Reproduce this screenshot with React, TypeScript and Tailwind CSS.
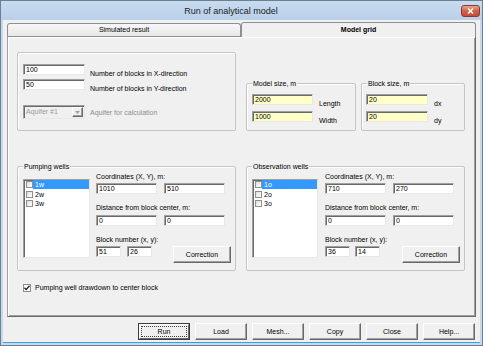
import type { ReactNode } from 'react'

const sunken =
  'border border-t-[#a0a0a0] border-l-[#a0a0a0] border-b-[#e8e8e8] border-r-[#e8e8e8] shadow-[inset_1px_1px_0_#696969]'
const raised =
  'border border-t-white border-l-white border-b-[#696969] border-r-[#696969] shadow-[inset_-1px_-1px_0_#a0a0a0]'

function Field({ value, className = '' }: { value: string; className?: string }) {
  return (
    <div className={`h-[11px] pl-[2px] pt-[1px] text-[7px] leading-[8px] ${sunken} ${className}`}>
      {value}
    </div>
  )
}

function Group({ title, className = '', children }: { title?: string; className?: string; children: ReactNode }) {
  return (
    <div className={`border border-[#c4c4c4] rounded-[2px] shadow-[inset_1px_1px_0_#fff] ${className}`}>
      {title && (
        <div className="-mt-[4px] ml-[5px] w-fit px-[1px] bg-[#f0f0f0] text-[7px] leading-[8px]">{title}</div>
      )}
      {children}
    </div>
  )
}

function Box({ checked = false }: { checked?: boolean }) {
  return (
    <div className="w-[7px] h-[7px] shrink-0 border border-[#8e8f8f] bg-gradient-to-br from-[#dcdcdc] to-white flex items-center justify-center">
      {checked && (
        <svg width="6" height="6" viewBox="0 0 6 6">
          <path d="M0.5 2.8 L2.2 4.6 L5.5 0.8" stroke="#1a1a1a" strokeWidth="1.3" fill="none" />
        </svg>
      )}
    </div>
  )
}

function Button({ label, className = '' }: { label: string; className?: string }) {
  return (
    <button className={`h-[17px] w-[52px] bg-[#f0f0f0] text-[7px] leading-[8px] ${raised} ${className}`}>
      {label}
    </button>
  )
}

interface WellsProps {
  title: string
  wells: string[]
  listW: string
  colGap: string
  coords: [string, string]
  blocks: [string, string]
  blockGap: string
}

function Wells({ title, wells, listW, colGap, coords, blocks, blockGap }: WellsProps) {
  return (
    <Group title={title} className="w-[219px] h-[105px]">
      <div className="flex pl-[5px]">
        <div className={`mt-[8px] h-[79px] bg-white ${sunken} ${listW}`}>
          {wells.map((w, i) => (
            <div key={w} className="flex items-center h-[9.5px] pl-[2px]">
              <Box />
              <span
                className={`flex-1 pl-[2px] text-[7px] leading-[9px] ${i === 0 ? 'bg-[#3399ff] text-white' : ''}`}
              >
                {w}
              </span>
            </div>
          ))}
        </div>
        <div className={`flex flex-col text-[7px] ${colGap}`}>
          <span className="mt-[1px] leading-[9px]">Coordinates (X, Y), m:</span>
          <div className="mt-[2px] flex gap-[7px]">
            <Field value={coords[0]} className="w-[61px] bg-white" />
            <Field value={coords[1]} className="w-[61px] bg-white" />
          </div>
          <span className="mt-[9px] leading-[9px]">Distance from block center, m:</span>
          <div className="mt-[3px] flex gap-[7px]">
            <Field value="0" className="w-[61px] bg-white" />
            <Field value="0" className="w-[61px] bg-white" />
          </div>
          <span className="mt-[9px] leading-[9px]">Block number (x, y):</span>
          <div className="mt-[2px] flex items-start">
            <div className={`flex ${blockGap}`}>
              <Field value={blocks[0]} className="w-[25px] bg-white" />
              <Field value={blocks[1]} className="w-[25px] bg-white" />
            </div>
            <Button label="Correction" className="ml-auto h-[15px] w-[58px]" />
          </div>
        </div>
      </div>
    </Group>
  )
}

export default function App() {
  return (
    <div className="w-[483px] h-[346px] flex flex-col bg-[#f0f0f0] text-black font-['Liberation_Sans',Arial,sans-serif] border border-[#6f7f92] overflow-hidden">
      <div className="h-[19px] shrink-0 flex items-center bg-gradient-to-b from-[#c8dcf0] to-[#b9d0e9]">
        <div className="flex-1 text-center text-[9px] leading-[10px] text-[#1c1c1c]">Run of analytical model</div>
        <div className="mr-[2px] w-[19px] h-[12px] rounded-[3px] border border-[#8a3a2e] bg-gradient-to-b from-[#e8a593] via-[#d0604a] to-[#c44a33] flex items-center justify-center">
          <svg width="7" height="6" viewBox="0 0 7 6">
            <path d="M1 0.5 L6 5.5 M6 0.5 L1 5.5" stroke="#fff" strokeWidth="1.5" />
          </svg>
        </div>
      </div>
      <div className="flex-1 flex flex-col border-l-[2px] border-r-[2px] border-b-[2px] border-[#c4d8ee] shadow-[inset_0_-1px_0_#3d9fe0]">
        <div className="px-[4px] pt-[1px]">
          <div className="flex items-end h-[15px]">
            <div className="w-[234px] h-[13px] border border-b-0 border-[#8c9096] rounded-t-[3px] bg-gradient-to-b from-[#f7f7f7] to-[#e8e8e8] text-center text-[7px] leading-[11px]">
              Simulated result
            </div>
            <div className="relative z-10 -mb-[1px] flex-1 h-[15px] border border-b-0 border-[#8c9096] rounded-t-[3px] bg-[#f0f0f0] text-center text-[7px] font-bold leading-[13px]">
              Model grid
            </div>
          </div>
          <div className="h-[281px] border border-t-[#8c9096] border-l-[#a0a0a0] border-b-[#696969] border-r-[#696969] shadow-[inset_1px_1px_0_#fff,inset_-1px_-1px_0_#a0a0a0] pl-[9px] pt-[15px]">
            <div className="flex items-end gap-[10px]">
              <Group className="w-[219px] h-[79px] pl-[5px] pt-[11px]">
                <div className="flex h-[11px] gap-[5px] text-[7px]">
                  <Field value="100" className="w-[62px] bg-white" />
                  <span className="mt-[5px] leading-[9px]">Number of blocks in X-direction</span>
                </div>
                <div className="mt-[4px] flex h-[11px] gap-[5px] text-[7px]">
                  <Field value="50" className="w-[62px] bg-white" />
                  <span className="mt-[5px] leading-[9px]">Number of blocks in Y-direction</span>
                </div>
                <div className="mt-[15px] flex items-center h-[14px] gap-[5px] text-[7px]">
                  <div className={`w-[62px] h-[14px] flex bg-[#f0f0f0] ${sunken}`}>
                    <span className="flex-1 pl-[2px] leading-[12px] text-[#9a9a9a]">Aquifer #1</span>
                    <div className={`w-[11px] m-[1px] bg-[#f0f0f0] flex items-center justify-center ${raised}`}>
                      <svg width="5" height="3" viewBox="0 0 5 3">
                        <path d="M0 0 L5 0 L2.5 3 Z" fill="#a0a0a0" />
                      </svg>
                    </div>
                  </div>
                  <span className="leading-[9px] text-[#8d8d8d]">Aquifer for calculation</span>
                </div>
              </Group>
              <div className="flex gap-[5px]">
                <Group title="Model size, m" className="w-[110px] h-[48px]">
                  <div className="pl-[5px] pt-[6px] text-[7px]">
                    <div className="flex h-[11px] gap-[6px]">
                      <Field value="2000" className="w-[61px] bg-[#ffffc8]" />
                      <span className="mt-[5px] leading-[9px]">Length</span>
                    </div>
                    <div className="mt-[6px] flex h-[11px] gap-[6px]">
                      <Field value="1000" className="w-[61px] bg-[#ffffc8]" />
                      <span className="mt-[5px] leading-[9px]">Width</span>
                    </div>
                  </div>
                </Group>
                <Group title="Block size, m" className="w-[104px] h-[48px]">
                  <div className="pl-[4px] pt-[6px] text-[7px]">
                    <div className="flex h-[11px] gap-[6px]">
                      <Field value="20" className="w-[62px] bg-[#ffffc8]" />
                      <span className="mt-[5px] leading-[9px]">dx</span>
                    </div>
                    <div className="mt-[6px] flex h-[11px] gap-[6px]">
                      <Field value="20" className="w-[62px] bg-[#ffffc8]" />
                      <span className="mt-[5px] leading-[9px]">dy</span>
                    </div>
                  </div>
                </Group>
              </div>
            </div>
            <div className="mt-[35px] flex gap-[10px]">
              <Wells
                title="Pumping wells"
                wells={['1w', '2w', '3w']}
                listW="w-[67px]"
                colGap="ml-[6px] w-[135px]"
                coords={['1010', '510']}
                blocks={['51', '26']}
                blockGap="gap-[6px]"
              />
              <Wells
                title="Observation wells"
                wells={['1o', '2o', '3o']}
                listW="w-[66px]"
                colGap="ml-[7px] w-[135px]"
                coords={['710', '270']}
                blocks={['36', '14']}
                blockGap="gap-[5px]"
              />
            </div>
            <div className="mt-[12px] ml-[6px] flex items-center gap-[4px] text-[7px] leading-[9px]">
              <div className="w-[8px] h-[8px] shrink-0 border border-[#8e8f8f] bg-white flex items-center justify-center">
                <svg width="6" height="6" viewBox="0 0 6 6">
                  <path d="M0.5 2.8 L2.2 4.6 L5.5 0.8" stroke="#1a1a1a" strokeWidth="1.3" fill="none" />
                </svg>
              </div>
              <span>Pumping well drawdown to center block</span>
            </div>
          </div>
          <div className="mt-[6px] pr-[1px] flex justify-end gap-[5px]">
            <button className="h-[17px] w-[52px] border border-[#3c3c3c] bg-[#f0f0f0] p-0 text-[7px] leading-[7px]">
              <div className="h-full border border-t-white border-l-white border-b-[#696969] border-r-[#696969] p-[1px]">
                <div className="h-full border border-dotted border-[#404040] flex items-center justify-center">Run</div>
              </div>
            </button>
            <Button label="Load" />
            <Button label="Mesh..." />
            <Button label="Copy" />
            <Button label="Close" />
            <Button label="Help..." />
          </div>
        </div>
      </div>
    </div>
  )
}
